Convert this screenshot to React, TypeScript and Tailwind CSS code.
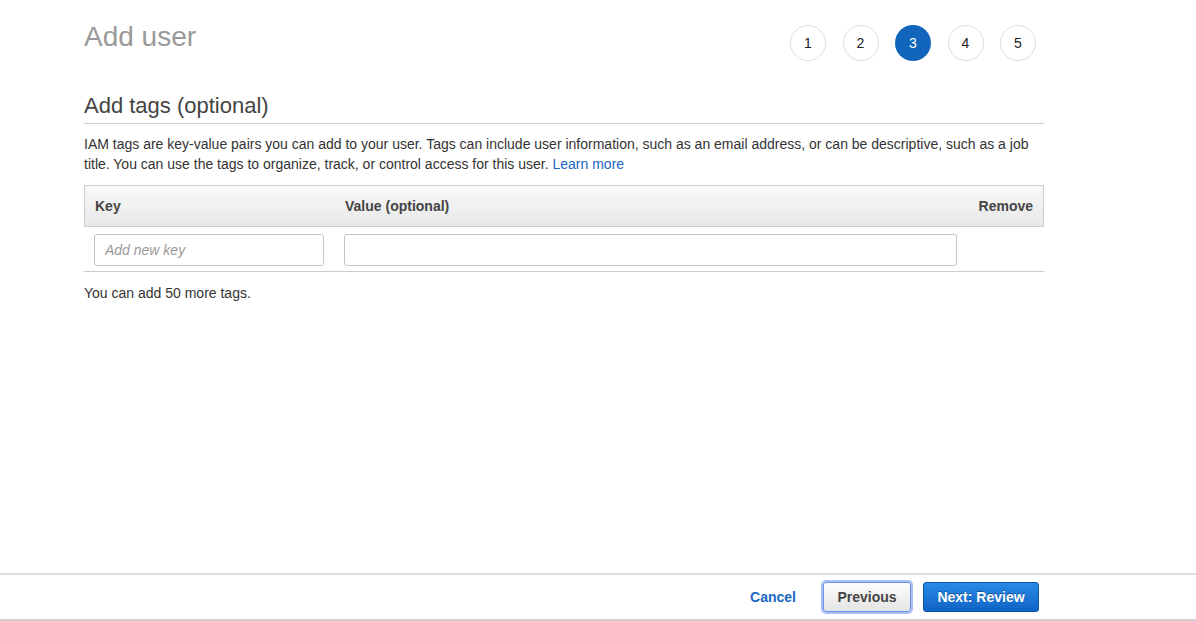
import React from 'react';

const STEPS = [1, 2, 3, 4, 5];
const ACTIVE_STEP = 3;

function StepIndicator() {
  return (
    <div className="flex gap-[16.5px] pt-[25px] pr-[8px]">
      {STEPS.map((n) => (
        <div
          key={n}
          className={
            n === ACTIVE_STEP
              ? 'flex h-9 w-9 items-center justify-center rounded-full bg-[#1166bb] text-[14px] text-white'
              : 'flex h-9 w-9 items-center justify-center rounded-full border border-[#dddddd] bg-white text-[14px] text-[#222]'
          }
        >
          {n}
        </div>
      ))}
    </div>
  );
}

function TagsTable() {
  return (
    <div className="mt-[11px]">
      {/* Header */}
      <div className="flex h-[42px] items-center border border-[#cccccc] bg-gradient-to-b from-[#f9f9f9] to-[#e8e8e8] text-[14px] font-bold text-[#444]">
        <div className="w-[250px] pl-[10px]">Key</div>
        <div className="flex-1 pl-[10px]">Value (optional)</div>
        <div className="w-[77px] pr-[10px] text-right">Remove</div>
      </div>
      {/* Row */}
      <div className="flex h-[45px] items-start border-b border-[#cccccc] pt-[7px]">
        <div className="w-[250px] pl-[10px]">
          <input
            placeholder="Add new key"
            className="h-[32px] w-[230px] rounded-[3px] border border-[#c4c4c4] px-[10px] text-[14px] text-[#333] outline-none placeholder:italic placeholder:text-[#999]"
          />
        </div>
        <div className="flex-1 pl-[10px] pr-[10px]">
          <input className="h-[32px] w-full rounded-[3px] border border-[#c4c4c4] px-[10px] text-[14px] outline-none" />
        </div>
        <div className="w-[77px]" />
      </div>
      <p className="pt-[11px] text-[14px] leading-[20px] text-[#333]">You can add 50 more tags.</p>
    </div>
  );
}

function Footer() {
  return (
    <div className="flex h-[48px] items-center justify-end border-t-2 border-b-2 border-t-[#dcdcdc] border-b-[#cfcfcf] pr-[157px]">
      <a href="#" className="mr-[27px] text-[14px] font-bold text-[#1a66c0]">
        Cancel
      </a>
      <button className="h-[30px] w-[88px] rounded-[3px] border border-[#6b8fe6] bg-gradient-to-b from-[#fdfdfd] to-[#e4e4e4] text-[14px] font-bold text-[#444] shadow-[0_0_0_2px_#a9c0f5]">
        Previous
      </button>
      <button className="ml-[12px] h-[30px] w-[116px] rounded-[3px] border border-[#0b55a8] bg-gradient-to-b from-[#2a8ae6] to-[#0f63c4] text-[14px] font-bold text-white [text-shadow:0_-1px_0_rgba(0,0,0,0.35)]">
        Next: Review
      </button>
    </div>
  );
}

export default function App() {
  return (
    <div className="flex h-[621px] w-[1196px] flex-col bg-white font-['Liberation_Sans',Arial,sans-serif]">
      <div className="flex-1">
        <div className="ml-[84px] w-[960px]">
          {/* Title + steps */}
          <div className="flex items-start justify-between">
            <h1 className="pt-[21px] text-[28px] leading-[32px] text-[#999]">Add user</h1>
            <StepIndicator />
          </div>

          {/* Section heading */}
          <h2 className="mt-[32px] border-b border-[#cccccc] pb-[4px] text-[22px] leading-[26px] text-[#444]">
            Add tags (optional)
          </h2>

          <p className="mt-[10px] text-[14px] leading-[20px] text-[#333]">
            IAM tags are key-value pairs you can add to your user. Tags can include user information, such as an email
            address, or can be descriptive, such as a job title. You can use the tags to organize, track, or control
            access for this user.{' '}
            <a href="#" className="text-[#1a66c0]">
              Learn more
            </a>
          </p>

          <TagsTable />
        </div>
      </div>
      <Footer />
    </div>
  );
}
